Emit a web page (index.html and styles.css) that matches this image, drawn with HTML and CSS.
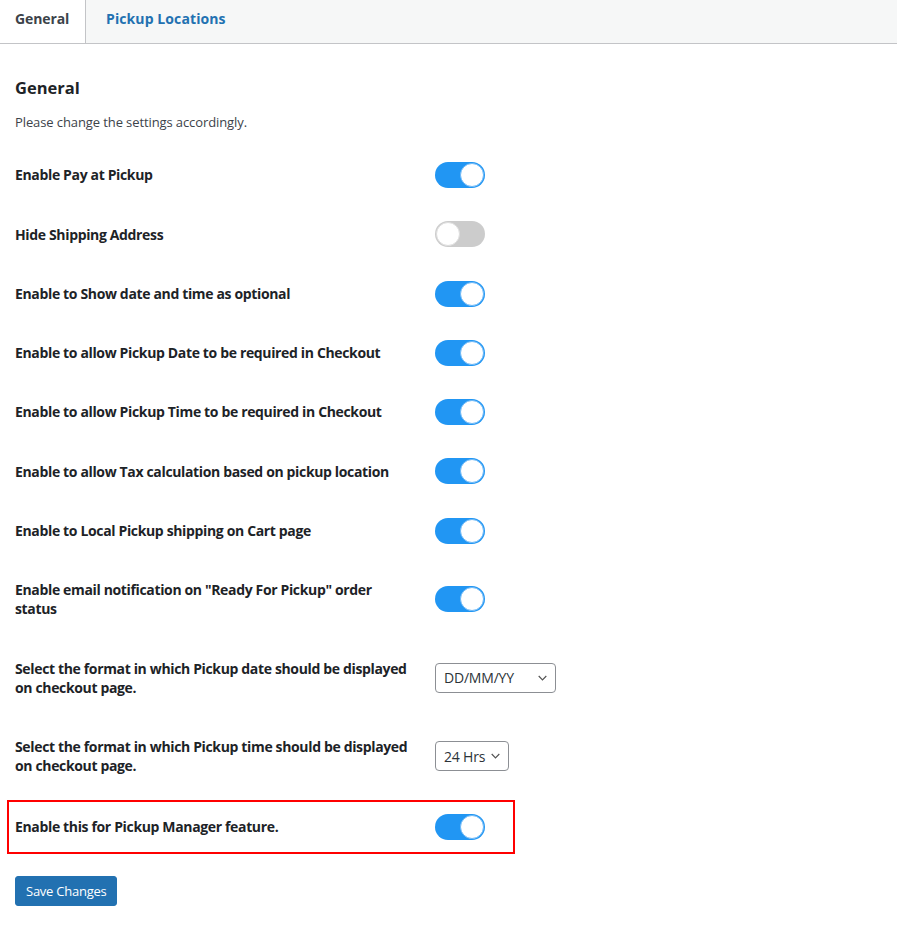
FILE: index.html
```html
<!DOCTYPE html>
<html lang="en">
<head>
  <meta charset="UTF-8">
  <meta name="viewport" content="width=device-width, initial-scale=1">
  <title>Local Pickup Settings</title>
  <link rel="stylesheet" href="styles.css">
</head>
<body>
  <nav class="nav-tabs">
    <a href="#" class="nav-tab nav-tab-active">General</a>
    <a href="#" class="nav-tab">Pickup Locations</a>
  </nav>

  <form class="settings-wrap">
    <h2>General</h2>
    <p class="description">Please change the settings accordingly.</p>

    <div class="form-table">
      <div class="form-row">
        <label class="row-label">Enable Pay at Pickup</label>
        <label class="switch"><input type="checkbox" checked><span class="slider"></span></label>
      </div>
      <div class="form-row">
        <label class="row-label">Hide Shipping Address</label>
        <label class="switch"><input type="checkbox"><span class="slider"></span></label>
      </div>
      <div class="form-row">
        <label class="row-label">Enable to Show date and time as optional</label>
        <label class="switch"><input type="checkbox" checked><span class="slider"></span></label>
      </div>
      <div class="form-row">
        <label class="row-label">Enable to allow Pickup Date to be required in Checkout</label>
        <label class="switch"><input type="checkbox" checked><span class="slider"></span></label>
      </div>
      <div class="form-row">
        <label class="row-label">Enable to allow Pickup Time to be required in Checkout</label>
        <label class="switch"><input type="checkbox" checked><span class="slider"></span></label>
      </div>
      <div class="form-row">
        <label class="row-label">Enable to allow Tax calculation based on pickup location</label>
        <label class="switch"><input type="checkbox" checked><span class="slider"></span></label>
      </div>
      <div class="form-row">
        <label class="row-label">Enable to Local Pickup shipping on Cart page</label>
        <label class="switch"><input type="checkbox" checked><span class="slider"></span></label>
      </div>
      <div class="form-row">
        <label class="row-label">Enable email notification on "Ready For Pickup" order status</label>
        <label class="switch"><input type="checkbox" checked><span class="slider"></span></label>
      </div>
      <div class="form-row">
        <label class="row-label">Select the format in which Pickup date should be displayed on checkout page.</label>
        <select class="select-date">
          <option>DD/MM/YY</option>
          <option>MM/DD/YY</option>
          <option>YY/MM/DD</option>
        </select>
      </div>
      <div class="form-row">
        <label class="row-label">Select the format in which Pickup time should be displayed on checkout page.</label>
        <select class="select-time">
          <option>24 Hrs</option>
          <option>12 Hrs</option>
        </select>
      </div>
      <div class="form-row form-row-highlight">
        <label class="row-label">Enable this for Pickup Manager feature.</label>
        <label class="switch"><input type="checkbox" checked><span class="slider"></span></label>
      </div>
    </div>

    <button type="submit" class="button-primary">Save Changes</button>
  </form>
</body>
</html>
```

FILE: styles.css
```css
body {
  margin: 0;
  font-family: 'Open Sans', 'Noto Sans', sans-serif;
  color: #1d2327;
  background-color: #fff;
}
a {
  text-decoration: none;
}

/* tab bar */
.nav-tabs {
  display: flex;
  height: 44px;
  background-color: #f6f7f7;
  border-bottom: 1px solid #c3c4c7;
  box-sizing: border-box;
}
.nav-tab {
  font-size: 14px;
  font-weight: bold;
  color: #2271b1;
  padding: 9px 20px 0;
  line-height: 19px;
  letter-spacing: 0.1px;
}
.nav-tab-active {
  color: #3c434a;
  background-color: #fff;
  border-right: 1px solid #c3c4c7;
  padding: 9px 15px 0 15px;
  width: 55px;
  letter-spacing: -0.1px;
}

/* settings body */
.settings-wrap {
  padding: 0 15px;
}
h2 {
  font-size: 16.5px;
  font-weight: bold;
  margin: 33px 0 0;
  line-height: 22px;
}
.description {
  font-size: 13px;
  color: #3c434a;
  margin: 14px 0 0;
  line-height: 18px;
  letter-spacing: -0.1px;
}
.form-table {
  margin-top: 14.4px;
}
.form-row {
  display: grid;
  grid-template-columns: 420px auto;
  align-items: center;
  justify-items: start;
}
.row-label {
  font-size: 14px;
  font-weight: bold;
  line-height: 19.25px;
  letter-spacing: -0.35px;
  padding: 20px 21px 20px 0;
}
.form-row .switch,
.form-row select {
  margin: 15px 0;
}
.form-row-highlight {
  border: 2px solid #f00;
  margin: 4.4px 0 0 -8px;
  padding: 0 28px 0 6px;
  width: 470px;
}
.form-row-highlight .row-label {
  padding-top: 15.4px;
  padding-bottom: 15.4px;
}
.form-row-highlight .switch {
  margin: 0;
}

/* toggle switch */
.switch {
  position: relative;
  display: inline-block;
  width: 50px;
  height: 26px;
}
.switch input {
  opacity: 0;
  width: 0;
  height: 0;
}
.slider {
  position: absolute;
  inset: 0;
  background-color: #ccc;
  border-radius: 13px;
  cursor: pointer;
}
.slider:before {
  content: "";
  position: absolute;
  left: 1px;
  top: 1px;
  width: 22px;
  height: 22px;
  border-radius: 50%;
  background-color: #fff;
  border: 1px solid #ddd;
}
.switch input:checked + .slider {
  background-color: #2196f3;
}
.switch input:checked + .slider:before {
  left: 25px;
  border-color: #6db8f7;
}

/* selects */
select {
  appearance: none;
  font-family: inherit;
  font-size: 14px;
  letter-spacing: -0.2px;
  color: #2c3338;
  height: 30px;
  border: 1px solid #8c8f94;
  border-radius: 4px;
  background-color: #fff;
  background-image: url("data:image/svg+xml,%3Csvg xmlns='http://www.w3.org/2000/svg' width='9' height='6' viewBox='0 0 9 6'%3E%3Cpath d='M0.7 1l3.8 3.8 3.8-3.8' fill='none' stroke='%23555' stroke-width='1.2'/%3E%3C/svg%3E");
  background-repeat: no-repeat;
  background-position: right 8px center;
  padding: 0 16px 0 8px;
  margin-left: 2px;
}
.select-date {
  width: 121px;
}
.select-time {
  width: 74px;
}

.button-primary {
  margin-top: 22px;
  font-family: inherit;
  font-size: 13px;
  letter-spacing: -0.25px;
  color: #fff;
  background-color: #2271b1;
  border: 1px solid #2271b1;
  border-radius: 3px;
  height: 30px;
  padding: 0 10px;
  cursor: pointer;
}
```
